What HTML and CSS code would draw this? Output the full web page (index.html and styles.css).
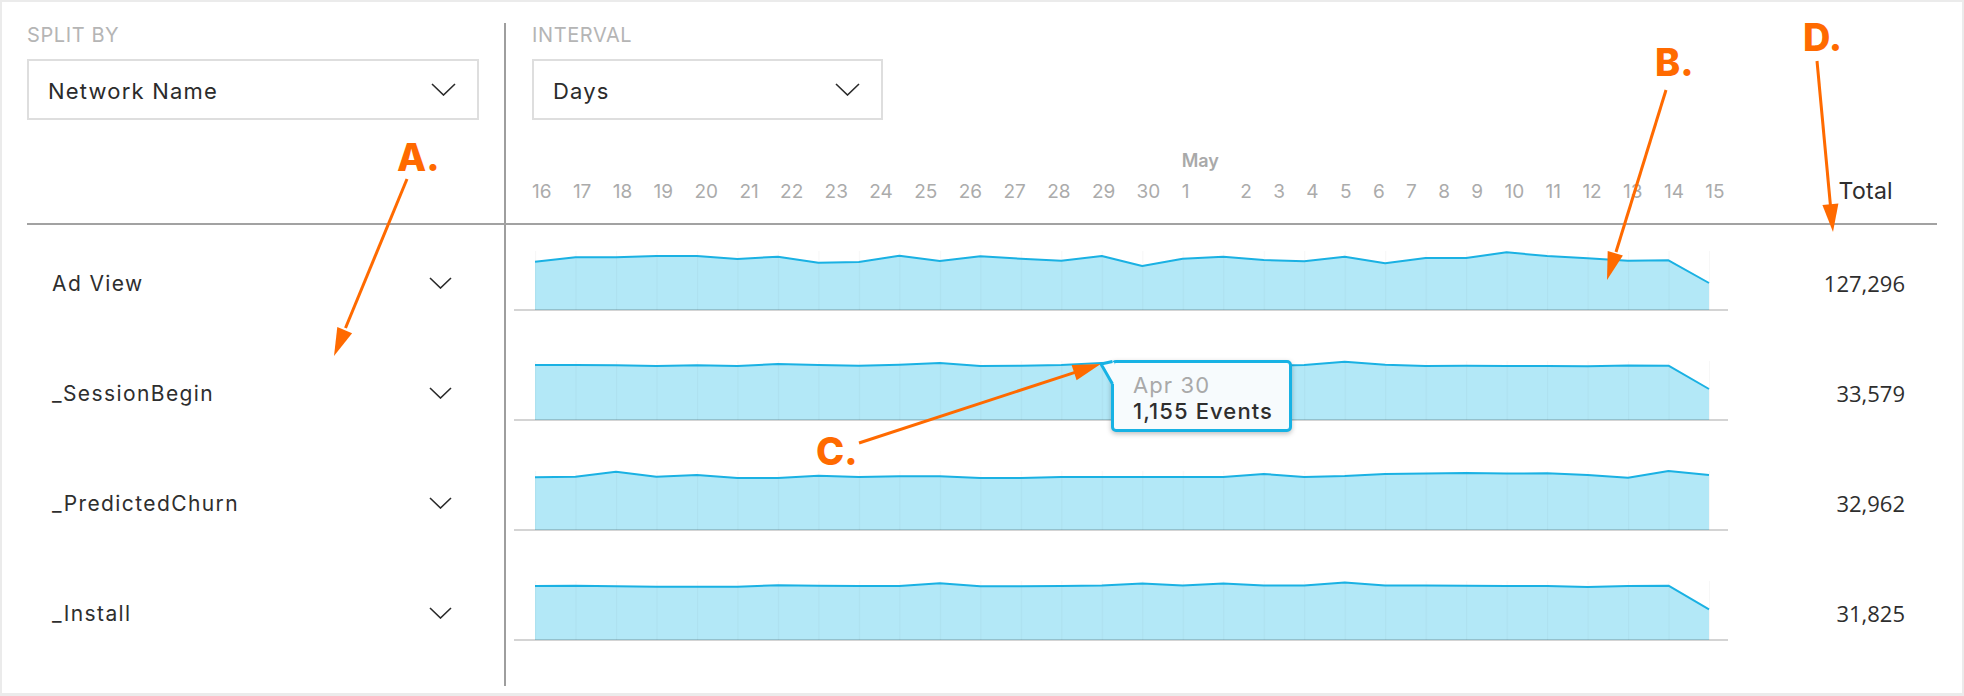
FILE: index.html
```html
<!DOCTYPE html>
<html>
<head>
<meta charset="utf-8">
<title>Events split by network</title>
<link rel="stylesheet" href="styles.css">
</head>
<body>
<div class="card">
  <div class="header">
    <div class="hcell hleft">
      <div class="label">SPLIT BY</div>
      <div class="dropdown dd-split">
        <span>Network Name</span>
        <svg class="chev" width="25" height="13" viewBox="0 0 25 13"><path d="M1 1 L12.5 12 L24 1"/></svg>
      </div>
    </div>
    <div class="hcell hright">
      <div class="label">INTERVAL</div>
      <div class="dropdown dd-interval">
        <span>Days</span>
        <svg class="chev" width="25" height="13" viewBox="0 0 25 13"><path d="M1 1 L12.5 12 L24 1"/></svg>
      </div>
      <div class="axis-row">
        <div class="axis">
          <span class="tick">16</span><span class="tick">17</span><span class="tick">18</span><span class="tick">19</span><span class="tick">20</span><span class="tick">21</span><span class="tick">22</span><span class="tick">23</span><span class="tick">24</span><span class="tick">25</span><span class="tick">26</span><span class="tick">27</span><span class="tick">28</span><span class="tick">29</span><span class="tick">30</span>
          <span class="tick"><span class="month">May</span><span>1</span></span>
          <span class="tick">2</span><span class="tick">3</span><span class="tick">4</span><span class="tick">5</span><span class="tick">6</span><span class="tick">7</span><span class="tick">8</span><span class="tick">9</span><span class="tick">10</span><span class="tick">11</span><span class="tick">12</span><span class="tick">13</span><span class="tick">14</span><span class="tick">15</span>
        </div>
        <div class="total-head">Total</div>
      </div>
    </div>
  </div>
  <div class="rule"></div>
  <div class="body">
    <div class="names">
      <div class="name-row"><span>Ad View</span><svg class="chev-sm" width="23" height="12" viewBox="0 0 23 12"><path d="M1 1 L11.5 11 L22 1"/></svg></div>
      <div class="name-row"><span>_SessionBegin</span><svg class="chev-sm" width="23" height="12" viewBox="0 0 23 12"><path d="M1 1 L11.5 11 L22 1"/></svg></div>
      <div class="name-row"><span>_PredictedChurn</span><svg class="chev-sm" width="23" height="12" viewBox="0 0 23 12"><path d="M1 1 L11.5 11 L22 1"/></svg></div>
      <div class="name-row"><span>_Install</span><svg class="chev-sm" width="23" height="12" viewBox="0 0 23 12"><path d="M1 1 L11.5 11 L22 1"/></svg></div>
    </div>
    <div class="series">
      <div class="series-row">
        <svg class="spark" width="1214" height="110" viewBox="0 0 1214 110">
          <defs><pattern id="g1" x="21" y="0" width="40.483" height="110" patternUnits="userSpaceOnUse"><rect class="gridbar" x="0" y="0" width="1" height="110"/></pattern></defs>
          <polygon class="area" points="21,33.7 61.5,29.3 102,29.3 142.4,28 182.9,28 223.4,31 263.9,28.7 304.4,34.7 344.9,34 385.3,27.7 425.8,33 466.3,28.3 506.8,30.7 547.3,32.7 587.8,28 628.2,38 668.7,30.7 709.2,28.7 749.7,32 790.2,33.3 830.7,28.7 871.1,35.3 911.6,30 952.1,30 992.6,24.3 1033.1,28 1073.6,30.2 1114,32.7 1154.5,32.3 1195,55 1195,82 21,82"/>
          <rect x="21" y="23" width="1175" height="59" fill="url(#g1)"/>
          <line class="base" x1="0" y1="82" x2="1214" y2="82"/>
          <polyline class="line" points="21,33.7 61.5,29.3 102,29.3 142.4,28 182.9,28 223.4,31 263.9,28.7 304.4,34.7 344.9,34 385.3,27.7 425.8,33 466.3,28.3 506.8,30.7 547.3,32.7 587.8,28 628.2,38 668.7,30.7 709.2,28.7 749.7,32 790.2,33.3 830.7,28.7 871.1,35.3 911.6,30 952.1,30 992.6,24.3 1033.1,28 1073.6,30.2 1114,32.7 1154.5,32.3 1195,55"/>
        </svg>
        <div class="total">127,296</div>
      </div>
      <div class="series-row">
        <svg class="spark" width="1214" height="110" viewBox="0 0 1214 110">
          <defs><pattern id="g2" x="21" y="0" width="40.483" height="110" patternUnits="userSpaceOnUse"><rect class="gridbar" x="0" y="0" width="1" height="110"/></pattern></defs>
          <polygon class="area" points="21,27 61.5,27 102,27.3 142.4,28 182.9,27.3 223.4,28 263.9,26 304.4,27 344.9,27.7 385.3,26.7 425.8,25 466.3,28 506.8,27.7 547.3,27 587.8,25 628.2,26.5 668.7,27 709.2,27.5 749.7,28 790.2,27 830.7,23.7 871.1,26.7 911.6,28 952.1,27.7 992.6,28 1033.1,28 1073.6,28.2 1114,27.5 1154.5,27.7 1195,51 1195,82 21,82"/>
          <rect x="21" y="23" width="1175" height="59" fill="url(#g2)"/>
          <line class="base" x1="0" y1="82" x2="1214" y2="82"/>
          <polyline class="line" points="21,27 61.5,27 102,27.3 142.4,28 182.9,27.3 223.4,28 263.9,26 304.4,27 344.9,27.7 385.3,26.7 425.8,25 466.3,28 506.8,27.7 547.3,27 587.8,25 628.2,26.5 668.7,27 709.2,27.5 749.7,28 790.2,27 830.7,23.7 871.1,26.7 911.6,28 952.1,27.7 992.6,28 1033.1,28 1073.6,28.2 1114,27.5 1154.5,27.7 1195,51"/>
        </svg>
        <div class="total">33,579</div>
      </div>
      <div class="series-row">
        <svg class="spark" width="1214" height="110" viewBox="0 0 1214 110">
          <defs><pattern id="g3" x="21" y="0" width="40.483" height="110" patternUnits="userSpaceOnUse"><rect class="gridbar" x="0" y="0" width="1" height="110"/></pattern></defs>
          <polygon class="area" points="21,29.3 61.5,28.7 102,23.7 142.4,28.7 182.9,27 223.4,30 263.9,30 304.4,27.7 344.9,29 385.3,28.3 425.8,28.3 466.3,30 506.8,30 547.3,29 587.8,29 628.2,29 668.7,29 709.2,29 749.7,26 790.2,29 830.7,28 871.1,26 911.6,25.5 952.1,25 992.6,25.5 1033.1,25.3 1073.6,27 1114,29.7 1154.5,23 1195,27 1195,82 21,82"/>
          <rect x="21" y="23" width="1175" height="59" fill="url(#g3)"/>
          <line class="base" x1="0" y1="82" x2="1214" y2="82"/>
          <polyline class="line" points="21,29.3 61.5,28.7 102,23.7 142.4,28.7 182.9,27 223.4,30 263.9,30 304.4,27.7 344.9,29 385.3,28.3 425.8,28.3 466.3,30 506.8,30 547.3,29 587.8,29 628.2,29 668.7,29 709.2,29 749.7,26 790.2,29 830.7,28 871.1,26 911.6,25.5 952.1,25 992.6,25.5 1033.1,25.3 1073.6,27 1114,29.7 1154.5,23 1195,27"/>
        </svg>
        <div class="total">32,962</div>
      </div>
      <div class="series-row">
        <svg class="spark" width="1214" height="110" viewBox="0 0 1214 110">
          <defs><pattern id="g4" x="21" y="0" width="40.483" height="110" patternUnits="userSpaceOnUse"><rect class="gridbar" x="0" y="0" width="1" height="110"/></pattern></defs>
          <polygon class="area" points="21,28 61.5,27.7 102,28.3 142.4,28.7 182.9,28.7 223.4,28.7 263.9,27.3 304.4,27.7 344.9,28 385.3,28 425.8,25.3 466.3,28.3 506.8,28.3 547.3,28 587.8,27.5 628.2,25.5 668.7,27.5 709.2,25.5 749.7,27.5 790.2,27.5 830.7,24.5 871.1,27.5 911.6,27.5 952.1,27.8 992.6,28 1033.1,28 1073.6,29 1114,28 1154.5,27.7 1195,51.3 1195,82 21,82"/>
          <rect x="21" y="23" width="1175" height="59" fill="url(#g4)"/>
          <line class="base" x1="0" y1="82" x2="1214" y2="82"/>
          <polyline class="line" points="21,28 61.5,27.7 102,28.3 142.4,28.7 182.9,28.7 223.4,28.7 263.9,27.3 304.4,27.7 344.9,28 385.3,28 425.8,25.3 466.3,28.3 506.8,28.3 547.3,28 587.8,27.5 628.2,25.5 668.7,27.5 709.2,25.5 749.7,27.5 790.2,27.5 830.7,24.5 871.1,27.5 911.6,27.5 952.1,27.8 992.6,28 1033.1,28 1073.6,29 1114,28 1154.5,27.7 1195,51.3"/>
        </svg>
        <div class="total">31,825</div>
      </div>
    </div>
  </div>
</div>

<div class="tooltip">
  <svg class="tail" width="20" height="30" viewBox="0 0 20 30">
    <polygon class="tail-fill" points="3,7 14.5,4.5 16.5,6 16.5,27 14.5,27"/>
    <path class="tail-edge" d="M14.5 4.5 L3 7 L14.5 27"/>
  </svg>
  <div class="tt-date">Apr 30</div>
  <div class="tt-value">1,155 Events</div>
</div>

<svg class="annotations" width="1964" height="696" viewBox="0 0 1964 696">
  <line x1="407" y1="179" x2="345.5" y2="328"/>
  <polygon points="334,356 352.1,333.2 337.3,327.1"/>
  <line x1="1666" y1="90" x2="1616" y2="252"/>
  <polygon points="1607,280 1622.9,255.6 1607.7,250.9"/>
  <line x1="859" y1="443" x2="1075" y2="372.4"/>
  <polygon points="1100.7,364 1076.6,380.3 1071.6,365.1"/>
  <line x1="1817" y1="61" x2="1830.5" y2="206"/>
  <polygon points="1833,232 1838.4,203.4 1822.4,204.9"/>
</svg>
<span class="note note-a">A.</span>
<span class="note note-b">B.</span>
<span class="note note-c">C.</span>
<span class="note note-d">D.</span>
</body>
</html>
```
FILE: styles.css
```css
* { box-sizing: border-box; }

html, body {
  margin: 0;
  padding: 0;
}

body {
  background: #ebebeb;
  width: 1964px;
  height: 696px;
  overflow: hidden;
  font-family: Inter, "Liberation Sans", sans-serif;
  color: #2e2e2e;
}

.card {
  margin: 2px;
  width: 1960px;
  height: 691px;
  background: #ffffff;
  padding-bottom: 7px;
  display: flex;
  flex-direction: column;
}

/* ---------- header ---------- */
.header {
  display: flex;
  padding-top: 21px;
}

.hleft {
  width: 504px;
  padding-left: 25px;
  border-right: 2px solid #9e9e9e;
}

.hright {
  flex: 1;
  padding-left: 26px;
}

.label {
  font-size: 20px;
  line-height: 24px;
  color: #b5b5b5;
  letter-spacing: 0.6px;
}

.dropdown {
  margin-top: 12px;
  height: 61px;
  border: 2px solid #dedede;
  background: #fff;
  display: flex;
  align-items: center;
  justify-content: space-between;
  padding: 2px 21px 0 19px;
  font-size: 22px;
  color: #2b2b2b;
  letter-spacing: 1.2px;
}

.dd-split { width: 452px; }
.dd-interval { width: 351px; }

.chev path,
.chev-sm path {
  fill: none;
  stroke: #2a2a2a;
  stroke-width: 1.6;
}

.chev { display: block; margin-top: -3px; }
.chev-sm { display: block; }

.axis-row {
  display: flex;
  align-items: flex-end;
  margin-top: 31px;
  padding-bottom: 20px;
}

.axis {
  width: 1193px;
  display: flex;
  justify-content: space-between;
  align-items: flex-end;
}

.tick {
  display: flex;
  flex-direction: column;
  font-size: 19px;
  line-height: 22px;
  color: #ababab;
}

.month {
  font-size: 18px;
  line-height: 20px;
  font-weight: 600;
  margin-bottom: 10px;
  color: #a9a9a9;
}

.total-head {
  flex: 1;
  text-align: right;
  padding-right: 69px;
  padding-bottom: 1px;
  font-size: 23px;
  line-height: 22px;
  color: #2e2e2e;
  letter-spacing: 0.3px;
}

.rule {
  height: 2px;
  margin: 0 25px;
  background: #a2a2a2;
}

/* ---------- body ---------- */
.body {
  display: flex;
}

.names {
  width: 504px;
  border-right: 2px solid #9e9e9e;
  padding: 3px 0 18px;
}

.name-row {
  height: 110px;
  display: flex;
  align-items: center;
  justify-content: space-between;
  padding: 0 52px 0 50px;
  font-size: 21px;
  letter-spacing: 1.4px;
  color: #2e2e2e;
}

.series {
  flex: 1;
  padding-top: 3px;
}

.series-row {
  height: 110px;
  display: flex;
  align-items: center;
}

.spark {
  display: block;
  margin-left: 8px;
  flex: none;
}

.area { fill: #b3e8f7; }
.gridbar { fill: rgba(0, 0, 0, 0.03); }
.base { stroke: rgba(0, 0, 0, 0.17); stroke-width: 2; }
.line {
  fill: none;
  stroke: #1ab1e3;
  stroke-width: 2;
  stroke-linejoin: round;
}

.total {
  flex: 1;
  text-align: right;
  padding-right: 57px;
  font-family: "Open Sans", "Noto Sans", sans-serif;
  font-size: 22px;
  color: #2e2e2e;
}

/* ---------- tooltip ---------- */
.tooltip {
  position: absolute;
  left: 1111px;
  top: 360px;
  width: 181px;
  height: 72px;
  border: 3px solid #17b2e4;
  border-radius: 5px;
  background: #f7fbfd;
  box-shadow: 0 2px 5px rgba(0, 0, 0, 0.25);
  padding: 9px 0 0 19px;
  font-size: 22px;
  line-height: 26px;
  letter-spacing: 1.1px;
}

.tail {
  position: absolute;
  left: -16px;
  top: -6px;
  display: block;
}

.tail-fill { fill: #f7fbfd; }
.tail-edge {
  fill: none;
  stroke: #17b2e4;
  stroke-width: 3;
  stroke-linejoin: round;
}

.tt-date { color: #a9a9a9; }
.tt-value { color: #2e2e2e; font-weight: 500; }

/* ---------- annotations ---------- */
.annotations {
  position: absolute;
  left: 0;
  top: 0;
  pointer-events: none;
}

.annotations line {
  stroke: #ff6a00;
  stroke-width: 3;
}

.annotations polygon { fill: #ff6a00; }

.note {
  position: absolute;
  font-family: Inter, "Liberation Sans", sans-serif;
  font-weight: 800;
  font-size: 38px;
  line-height: 38px;
  color: #ff6a00;
}

.note-a { left: 397px; top: 138px; }
.note-b { left: 1655px; top: 43px; }
.note-c { left: 816px; top: 432px; }
.note-d { left: 1803px; top: 18px; }
```
